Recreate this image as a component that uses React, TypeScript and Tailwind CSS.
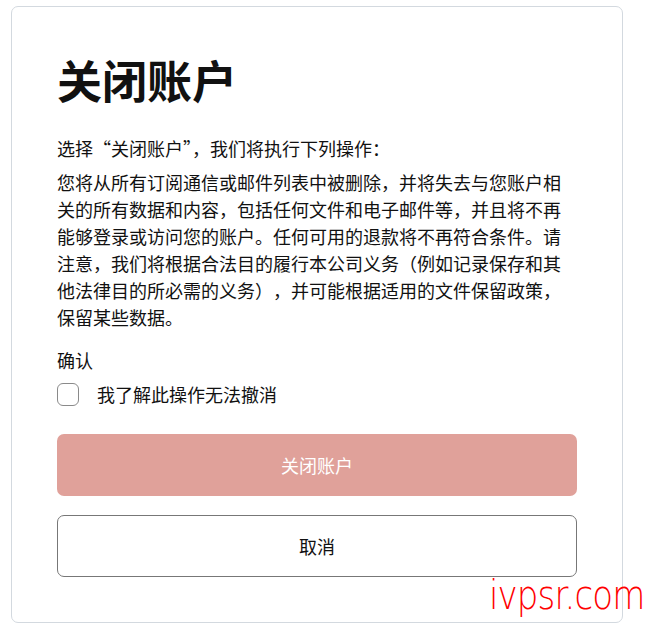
import { useState } from 'react';

export default function App() {
    const [checked, setChecked] = useState(false);

    return (
        <div
            className="relative min-h-[631px] w-[656px] bg-white text-[#111111]"
            style={{ fontFamily: '"Noto Sans CJK SC", "Noto Sans", sans-serif' }}
        >
            <div className="ml-[11px] pt-[6px]">
                <div className="flex w-[612px] flex-col rounded-[7px] border border-[#d3d9df] px-[45px] pt-[44px] pb-[45px]">
                    <h1 className="text-[45px] font-bold leading-[57px]">关闭账户</h1>

                    <p className="mt-[27px] text-[18px] leading-[27px]">选择“关闭账户”，我们将执行下列操作：</p>
                    <p className="mt-[7px] text-[18px] leading-[27px] [text-spacing-trim:space-all]">
                        您将从所有订阅通信或邮件列表中被删除，并将失去与您账户相关的所有数据和内容，包括任何文件和电子邮件等，并且将不再能够登录或访问您的账户。任何可用的退款将不再符合条件。请注意，我们将根据合法目的履行本公司义务（例如记录保存和其他法律目的所必需的义务），并可能根据适用的文件保留政策，保留某些数据。
                    </p>

                    <div className="mt-[16px] text-[18px] leading-[27px]">确认</div>
                    <label className="mt-[7px] flex cursor-pointer items-center gap-[18px] text-[18px] leading-[27px]">
                        <span
                            className={`flex h-[23px] w-[22px] items-center justify-center rounded-[6px] border-[1.5px] ${checked ? 'border-[#c0392b] bg-[#c0392b]' : 'border-[#8a8a8a] bg-white'}`}
                            onClick={() => setChecked(!checked)}
                        >
                            {checked && (
                                <svg viewBox="0 0 16 16" className="h-3 w-3" fill="none" stroke="white" strokeWidth="2.5">
                                    <path d="M3 8.5l3.2 3L13 4.5" />
                                </svg>
                            )}
                        </span>
                        <span>我了解此操作无法撤消</span>
                    </label>

                    <button
                        className={`mt-[26px] h-[62px] w-full rounded-[7px] text-[18px] text-white ${checked ? 'bg-[#c0392b]' : 'bg-[#e0a19a]'}`}
                        disabled={!checked}
                    >
                        关闭账户
                    </button>
                    <button className="mt-[19px] h-[62px] w-full rounded-[7px] border border-[#777777] bg-white text-[18px] text-[#111111]">
                        取消
                    </button>
                </div>
            </div>

            {/* watermark */}
            <div
                className="absolute left-[489px] top-[575px] origin-left scale-x-[0.85] text-[40px] font-extralight leading-none tracking-[-1px] text-[#ff0000]"
                style={{ fontFamily: '"DejaVu Sans", sans-serif' }}
            >
                ivpsr.com
            </div>
        </div>
    );
}
